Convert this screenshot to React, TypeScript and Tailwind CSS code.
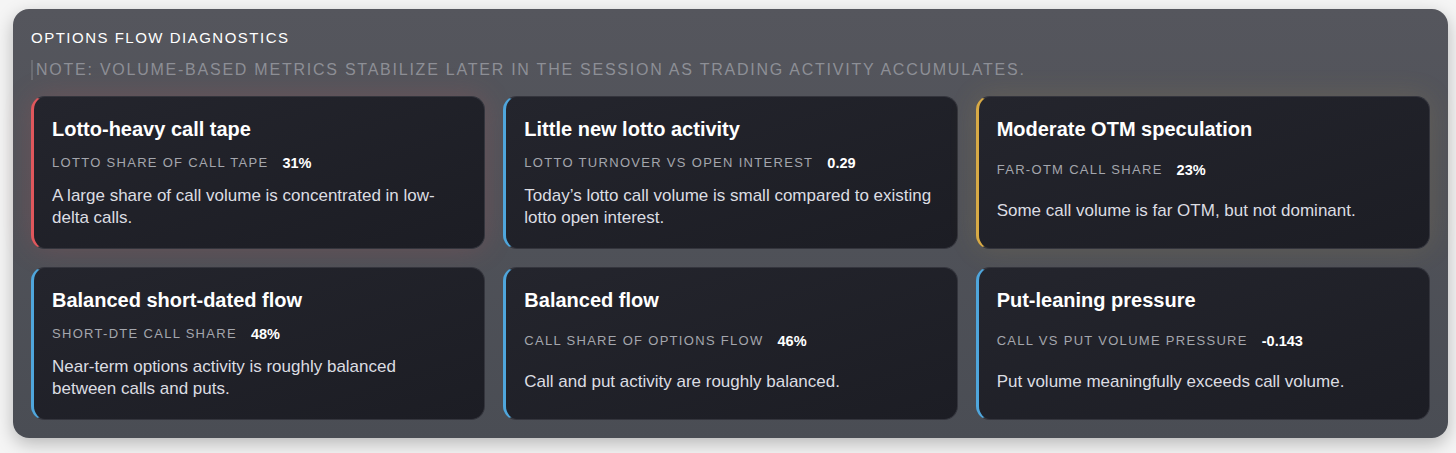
import React from 'react';

type Tone = 'red' | 'blue' | 'amber';

interface Diagnostic {
  title: string;
  label: string;
  value: string;
  text: string;
  tone: Tone;
}

const diagnostics: Diagnostic[] = [
  {
    title: 'Lotto-heavy call tape',
    label: 'Lotto share of call tape',
    value: '31%',
    text: 'A large share of call volume is concentrated in low-delta calls.',
    tone: 'red',
  },
  {
    title: 'Little new lotto activity',
    label: 'Lotto turnover vs open interest',
    value: '0.29',
    text: 'Today\u2019s lotto call volume is small compared to existing lotto open interest.',
    tone: 'blue',
  },
  {
    title: 'Moderate OTM speculation',
    label: 'Far-OTM call share',
    value: '23%',
    text: 'Some call volume is far OTM, but not dominant.',
    tone: 'amber',
  },
  {
    title: 'Balanced short-dated flow',
    label: 'Short-DTE call share',
    value: '48%',
    text: 'Near-term options activity is roughly balanced between calls and puts.',
    tone: 'blue',
  },
  {
    title: 'Balanced flow',
    label: 'Call share of options flow',
    value: '46%',
    text: 'Call and put activity are roughly balanced.',
    tone: 'blue',
  },
  {
    title: 'Put-leaning pressure',
    label: 'Call vs put volume pressure',
    value: '-0.143',
    text: 'Put volume meaningfully exceeds call volume.',
    tone: 'blue',
  },
];

const toneClasses: Record<Tone, string> = {
  red: 'border-l-[#e0575c] shadow-[0_0_28px_rgba(200,80,80,0.22)]',
  blue: 'border-l-[#4fa6dc]',
  amber: 'border-l-[#d8aa45] shadow-[0_0_28px_rgba(200,160,70,0.16)]',
};

const DiagnosticCard = ({ item }: { item: Diagnostic }) => (
  <div
    className={`flex h-[153px] flex-col rounded-[14px] border border-[#34353d] border-l-[3px] bg-gradient-to-br from-[#24252d] to-[#1c1d24] pl-[18px] pr-5 pt-5 pb-[5px] ${toneClasses[item.tone]}`}
  >
    <h3 className="text-[20px] font-bold leading-6 text-white">{item.title}</h3>
    <div className="flex flex-1 flex-col justify-evenly">
      <div className="flex items-center gap-[14px]">
        <span className="text-[13px] uppercase leading-4 tracking-[0.1em] text-[#a4a6ad]">{item.label}</span>
        <span className="text-[14.5px] font-bold leading-4 text-white">{item.value}</span>
      </div>
      <p className="max-w-[410px] text-[17px] leading-[22px] text-[#dcdde2]">{item.text}</p>
    </div>
  </div>
);

export default function App() {
  return (
    <div className="min-h-screen bg-[#f5f5f5] px-[13px] pt-[9px] font-['Liberation_Sans',Arial,sans-serif]">
      <div className="w-[1435px] rounded-[16px] bg-gradient-to-b from-[#55565d] to-[#4a4d54] px-[18px] pt-[19px] pb-[18px] shadow-[0_6px_18px_rgba(0,0,0,0.25)]">
        <h2 className="text-[15px] font-medium uppercase leading-5 tracking-[0.1em] text-white">Options flow diagnostics</h2>
        <p className="mt-[12px] border-l-2 border-[#6b6d73] pl-[3px] text-[16px] uppercase leading-5 tracking-[0.11em] text-[#8d8f96]">
          Note: Volume-based metrics stabilize later in the session as trading activity accumulates.
        </p>
        <div className="mt-[16px] grid grid-cols-3 gap-[18px]">
          {diagnostics.map((item) => (
            <DiagnosticCard key={item.title} item={item} />
          ))}
        </div>
      </div>
    </div>
  );
}
